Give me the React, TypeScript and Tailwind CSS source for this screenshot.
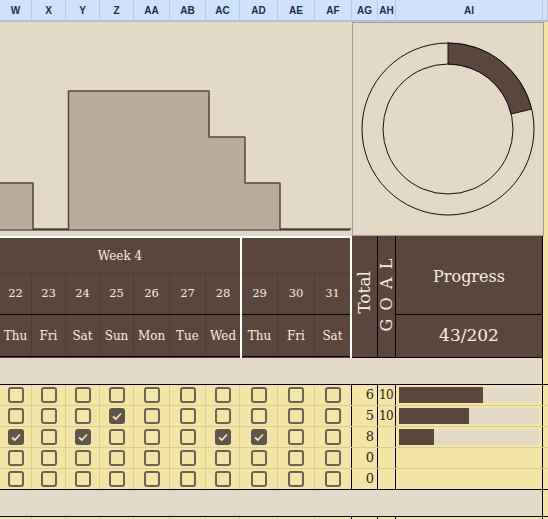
const grid =
  "grid grid-cols-[32px_34px_34px_34px_36px_36px_34px_38px_37px_37px_26px_18px_147px_5px]";

const letters = ["W", "X", "Y", "Z", "AA", "AB", "AC", "AD", "AE", "AF", "AG", "AH", "AI", ""];

const weekA = [
  { d: 22, n: "Thu", w: "w-[32px]" },
  { d: 23, n: "Fri", w: "w-[34px]" },
  { d: 24, n: "Sat", w: "w-[34px]" },
  { d: 25, n: "Sun", w: "w-[34px]" },
  { d: 26, n: "Mon", w: "w-[36px]" },
  { d: 27, n: "Tue", w: "w-[36px]" },
  { d: 28, n: "Wed", w: "w-[34px]" },
];

const weekB = [
  { d: 29, n: "Thu", w: "w-[36px]" },
  { d: 30, n: "Fri", w: "w-[37px]" },
  { d: 31, n: "Sat", w: "w-[35px]" },
];

const rows = [
  { checks: [] as number[], total: 6, goal: "10", pct: 60 },
  { checks: [3], total: 5, goal: "10", pct: 50 },
  { checks: [0, 2, 6, 7], total: 8, goal: "", pct: 25 },
  { checks: [] as number[], total: 0, goal: "", pct: 0 },
  { checks: [] as number[], total: 0, goal: "", pct: 0 },
];

const serif = "font-['DejaVu_Serif',serif]";

const Box = ({ on }: { on: boolean }) =>
  on ? (
    <div className="w-[16px] h-[16px] rounded-[3px] bg-[#5d564f] flex items-center justify-center">
      <svg width="12" height="12" viewBox="0 0 12 12">
        <path d="M2 6.5 L4.8 9 L10 3.5" fill="none" stroke="#f3e5a6" strokeWidth="1.8" />
      </svg>
    </div>
  ) : (
    <div className="w-[16px] h-[16px] rounded-[3px] border-2 border-[#6b6358]" />
  );

function Donut() {
  const cx = 95;
  const cy = 106;
  const ro = 86;
  const ri = 65;
  const a = (43 / 202) * Math.PI * 2;
  const sx = Math.sin(a);
  const cy2 = -Math.cos(a);
  const d = `M ${cx} ${cy - ro} A ${ro} ${ro} 0 0 1 ${cx + ro * sx} ${cy + ro * cy2} L ${cx + ri * sx} ${cy + ri * cy2} A ${ri} ${ri} 0 0 0 ${cx} ${cy - ri} Z`;
  return (
    <svg className="block" width="190" height="212" viewBox="0 0 190 212">
      <circle cx={cx} cy={cy} r={ro} fill="#e2d9c7" stroke="#111" strokeWidth="1" />
      <circle cx={cx} cy={cy} r={ri} fill="#e2d9c7" stroke="#111" strokeWidth="1" />
      <path d={d} fill="#5b463e" stroke="#111" strokeWidth="1" />
    </svg>
  );
}

function Chart() {
  const p =
    "M 0 161 L 33 161 L 33 207 L 68.5 207 L 68.5 69 L 209 69 L 209 115 L 245 115 L 245 161 L 280 161 L 280 207 L 351 207";
  return (
    <svg className="block" width="352" height="214" viewBox="0 0 352 214">
      <path d={p + " L 0 207 Z"} fill="#b8ab9b" stroke="none" />
      <path d={p} fill="none" stroke="#5b463e" strokeWidth="1.5" strokeLinejoin="round" />
      <line x1="0" y1="208" x2="350" y2="208" stroke="#111" strokeWidth="1" />
    </svg>
  );
}

function Spacer() {
  return (
    <div className="flex h-[27px] border-b border-black">
      <div className="w-[543px] border-r border-black bg-[#e2d9c7]" />
      <div className="flex-1 bg-[#f3e5a6]" />
    </div>
  );
}

export default function App() {
  return (
    <div className="w-[548px] h-[519px] overflow-hidden bg-[#e2d9c7] text-[#2b221d]">
      {/* column letters */}
      <div className={grid + " h-[22px] bg-[#d0e1fb] border-b-2 border-[#b4bfcf]"}>
        {letters.map((l, i) => (
          <div
            key={i}
            className="flex items-center justify-center border-r border-[#bcc8da] text-[10px] font-bold text-[#1a2b57] font-['Liberation_Sans',sans-serif]"
          >
            {l}
          </div>
        ))}
      </div>

      {/* chart area */}
      <div className="flex h-[214px]">
        <div className="w-[352px] shrink-0">
          <Chart />
        </div>
        <div className="w-[192px] h-[214px] shrink-0 border border-[#a3a09b] overflow-hidden">
          <Donut />
        </div>
        <div className="w-[4px] bg-[#f3e5a6]" />
      </div>

      {/* dark header */}
      <div className={"flex h-[122px] bg-[#5b463e] text-[#f4efe6] " + serif}>
        <div className="w-[240px] shrink-0 flex flex-col border-t-2 border-white">
          <div className="h-[35px] flex items-center justify-center text-[12px]">Week 4</div>
          <div className="h-[42px] flex border-b border-black">
            {weekA.map((c) => (
              <div
                key={c.d}
                className={c.w + " border-r border-t border-[#4e3c34] flex items-center justify-center text-[11.5px] last:border-r-0"}
              >
                {c.d}
              </div>
            ))}
          </div>
          <div className="h-[42px] flex border-b border-black">
            {weekA.map((c) => (
              <div
                key={c.d}
                className={c.w + " border-r border-[#4e3c34] flex items-center justify-center text-[12px] last:border-r-0"}
              >
                {c.n}
              </div>
            ))}
          </div>
        </div>
        <div className="w-[112px] shrink-0 flex flex-col border-x-2 border-t-2 border-white">
          <div className="h-[35px]" />
          <div className="h-[42px] flex border-b border-black">
            {weekB.map((c) => (
              <div
                key={c.d}
                className={c.w + " border-r border-t border-[#4e3c34] flex items-center justify-center text-[11.5px] last:border-r-0"}
              >
                {c.d}
              </div>
            ))}
          </div>
          <div className="h-[42px] flex border-b border-black">
            {weekB.map((c) => (
              <div
                key={c.d}
                className={c.w + " border-r border-[#4e3c34] flex items-center justify-center text-[12px] last:border-r-0"}
              >
                {c.n}
              </div>
            ))}
          </div>
        </div>
        <div className="w-[26px] shrink-0 border-r border-b border-black flex items-center justify-center">
          <span className="[writing-mode:vertical-rl] rotate-180 text-[17px] mt-[-8px]">Total</span>
        </div>
        <div className="w-[18px] shrink-0 border-r border-b border-black flex items-center justify-center">
          <span className="[writing-mode:vertical-rl] rotate-180 text-[16px] tracking-[0.1em] mt-[-4px]">G O A L</span>
        </div>
        <div className="w-[147px] shrink-0 border-r border-b border-black flex flex-col">
          <div className="h-[79px] border-b border-black flex items-center justify-center text-[16px] pt-[4px]">
            Progress
          </div>
          <div className="flex-1 flex items-center justify-center text-[17px]">43/202</div>
        </div>
        <div className="w-[5px] bg-[#f3e5a6]" />
      </div>

      <Spacer />

      {/* habit rows */}
      {rows.map((r, ri) => (
        <div
          key={ri}
          className={grid + " h-[21px] bg-[#f3e5a6] " + (ri === rows.length - 1 ? "border-b border-black" : "border-b border-[#dccd8f]")}
        >
          {Array.from({ length: 10 }).map((_, ci) => (
            <div
              key={ci}
              className={"flex items-center justify-center " + (ci === 9 ? "border-r border-black" : "border-r border-[#dccd8f]")}
            >
              <Box on={r.checks.includes(ci)} />
            </div>
          ))}
          <div className={"border-r border-black flex items-center justify-end pr-[3px] text-[13px] " + serif}>
            {r.total}
          </div>
          <div className={"border-r border-black flex items-center text-[12px] tracking-[-0.05em] pl-[1px] " + serif}>
            {r.goal}
          </div>
          <div className="border-r border-black flex items-center px-[3px]">
            {r.pct > 0 && (
              <div className="w-full h-[16px] bg-[#e2d9c7]">
                <div className="h-full bg-[#5b463e]" style={{ width: r.pct + "%" }} />
              </div>
            )}
          </div>
          <div className="bg-[#f3e5a6]" />
        </div>
      ))}

      <Spacer />

      <div className={grid + " h-[21px] bg-[#f3e5a6]"}>
        {Array.from({ length: 10 }).map((_, ci) => (
          <div key={ci} className={ci === 9 ? "border-r border-black" : "border-r border-[#dccd8f]"} />
        ))}
        <div className="border-r border-black" />
        <div className="border-r border-black" />
        <div className="border-r border-black" />
        <div />
      </div>
    </div>
  );
}
